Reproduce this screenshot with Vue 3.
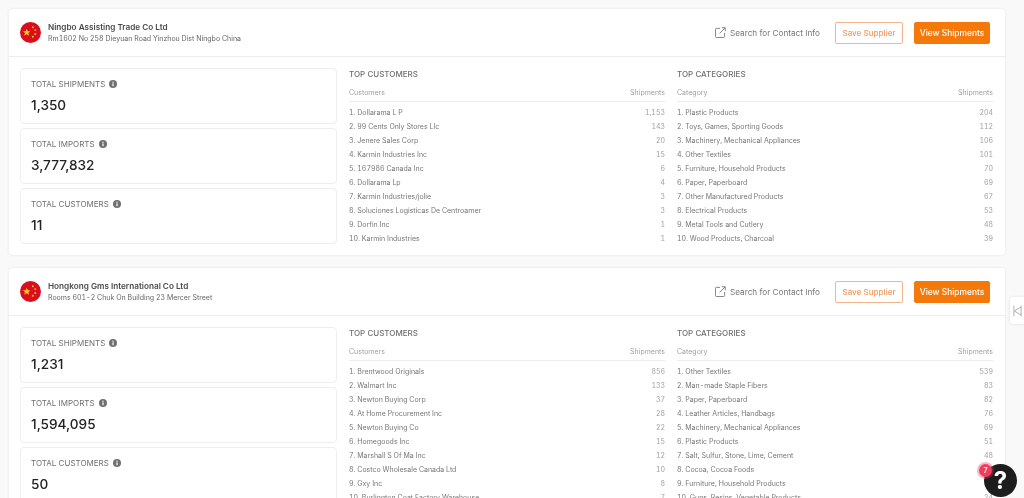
<script setup>
const suppliers = [
  {
    name: 'Ningbo Assisting Trade Co Ltd',
    address: 'Rm1602 No 258 Dieyuan Road Yinzhou Dist Ningbo China',
    stats: [['TOTAL SHIPMENTS', '1,350'], ['TOTAL IMPORTS', '3,777,832'], ['TOTAL CUSTOMERS', '11']],
    customers: [['Dollarama L P', '1,153'], ['99 Cents Only Stores Llc', '143'], ['Jenere Sales Corp', '20'], ['Karmin Industries Inc', '15'], ['167986 Canada Inc', '6'], ['Dollarama Lp', '4'], ['Karmin Industries/jolie', '3'], ['Soluciones Logisticas De Centroamer', '3'], ['Dorfin Inc', '1'], ['Karmin Industries', '1']],
    categories: [['Plastic Products', '204'], ['Toys, Games, Sporting Goods', '112'], ['Machinery, Mechanical Appliances', '106'], ['Other Textiles', '101'], ['Furniture, Household Products', '70'], ['Paper, Paperboard', '69'], ['Other Manufactured Products', '67'], ['Electrical Products', '53'], ['Metal Tools and Cutlery', '48'], ['Wood Products, Charcoal', '39']]
  },
  {
    name: 'Hongkong Gms International Co Ltd',
    address: 'Rooms 601-2 Chuk On Building 23 Mercer Street',
    stats: [['TOTAL SHIPMENTS', '1,231'], ['TOTAL IMPORTS', '1,594,095'], ['TOTAL CUSTOMERS', '50']],
    customers: [['Brentwood Originals', '856'], ['Walmart Inc', '133'], ['Newton Buying Corp', '37'], ['At Home Procurement Inc', '28'], ['Newton Buying Co', '22'], ['Homegoods Inc', '15'], ['Marshall S Of Ma Inc', '12'], ['Costco Wholesale Canada Ltd', '10'], ['Gxy Inc', '8'], ['Burlington Coat Factory Warehouse', '7']],
    categories: [['Other Textiles', '539'], ['Man-made Staple Fibers', '83'], ['Paper, Paperboard', '82'], ['Leather Articles, Handbags', '76'], ['Machinery, Mechanical Appliances', '69'], ['Plastic Products', '51'], ['Salt, Sulfur, Stone, Lime, Cement', '48'], ['Cocoa, Cocoa Foods', '47'], ['Furniture, Household Products', '32'], ['Guns, Resins, Vegetable Products', '24']]
  }
]
const tables = (s) => [
  { title: 'TOP CUSTOMERS', head: 'Customers', rows: s.customers },
  { title: 'TOP CATEGORIES', head: 'Category', rows: s.categories }
]
const stars = [[13.5, 5.5, 1], [16, 8.5, 1], [16, 12.5, 1], [13.5, 15.5, 1]]
</script>

<template>
  <div class="page">
    <section v-for="s in suppliers" :key="s.name" class="card">
      <header class="head">
        <svg class="flag" viewBox="0 0 22 22" width="21" height="21">
          <circle cx="11" cy="11" r="11" fill="#d80f1e" />
          <polygon points="7,7 8.1,9.6 10.9,9.8 8.8,11.6 9.5,14.4 7,12.9 4.5,14.4 5.2,11.6 3.1,9.8 5.9,9.6" fill="#ffc91f" />
          <circle v-for="(p, i) in stars" :key="i" :cx="p[0]" :cy="p[1]" :r="p[2]" fill="#ffc91f" />
        </svg>
        <div class="who">
          <div class="name">{{ s.name }}</div>
          <div class="addr">{{ s.address }}</div>
        </div>
        <a class="contact">
          <svg viewBox="0 0 12 12" width="11" height="11" fill="none" stroke="#7a7a7a" stroke-width="1">
            <path d="M5.5 1.5H1.5a1 1 0 0 0-1 1v8a1 1 0 0 0 1 1h8a1 1 0 0 0 1-1V6.5" />
            <path d="M5 7L11 1M7.5 .8H11.2V4.5" />
          </svg>
          Search for Contact Info
        </a>
        <button class="btn save">Save Supplier</button>
        <button class="btn view">View Shipments</button>
      </header>
      <div class="body">
        <div class="stats">
          <div v-for="st in s.stats" :key="st[0]" class="stat">
            <div class="label">
              {{ st[0] }}
              <svg viewBox="0 0 8 8" width="8" height="8">
                <circle cx="4" cy="4" r="4" fill="#707070" />
                <rect x="3.4" y="3.4" width="1.2" height="2.8" fill="#fff" />
                <rect x="3.4" y="1.7" width="1.2" height="1.1" fill="#fff" />
              </svg>
            </div>
            <div class="value">{{ st[1] }}</div>
          </div>
        </div>
        <div v-for="t in tables(s)" :key="t.title" class="table">
          <h3>{{ t.title }}</h3>
          <div class="thead"><span>{{ t.head }}</span><span>Shipments</span></div>
          <div v-for="(r, i) in t.rows" :key="r[0]" class="row">
            <span class="item">{{ i + 1 }}. {{ r[0] }}</span>
            <span class="num">{{ r[1] }}</span>
          </div>
        </div>
      </div>
    </section>

    <div class="tab">
      <svg viewBox="0 0 10 13" width="9" height="12" fill="none" stroke="#a8a8a8" stroke-width="1">
        <path d="M1 0.5V12.5M9 0.5V12.5M9 2L1.5 6.5L9 11" />
      </svg>
    </div>
    <div class="help">?</div>
    <div class="badge">7</div>
  </div>
</template>

<style>
html, body { margin: 0; background: #f9f9f9; overflow: hidden; }
</style>

<style scoped>
.page {
  position: relative;
  height: 498px;
  overflow: hidden;
  box-sizing: border-box;
  padding: 9px 19px 0 9px;
  background: #f9f9f9;
  font-family: Inter, "Liberation Sans", sans-serif;
  display: flex;
  flex-direction: column;
  gap: 13px;
  filter: blur(0.35px);
}
.card {
  flex: none;
  height: 246px;
  background: #fff;
  border-radius: 4px;
  box-shadow: 0 0 3px rgba(0, 0, 0, 0.09);
}
.head {
  height: 48px;
  box-sizing: border-box;
  border-bottom: 1px solid #ececec;
  padding: 0 15px 0 11px;
  display: flex;
  align-items: center;
}
.flag { flex: none; margin-right: 7px; }
.who { flex: 1; padding-top: 1px; }
.name { font-size: 8.2px; font-weight: 600; color: #4a4a4a; line-height: 12px; }
.addr { font-size: 7px; color: #666; line-height: 12px; font-variant-numeric: tabular-nums; }
.contact {
  display: flex;
  align-items: center;
  gap: 4px;
  font-size: 8.2px;
  color: #777;
  margin-right: 15px;
}
.btn {
  font-family: inherit;
  font-size: 8.1px;
  font-weight: 500;
  height: 22px;
  border-radius: 2px;
  padding: 0;
}
.save { width: 68px; background: #fff; border: 1px solid #f4b48c; color: #f39a62; margin-right: 11px; }
.view { width: 76px; background: #f5790a; border: 1px solid #f5790a; color: #fff; font-size: 8.4px; }
.body {
  display: flex;
  gap: 12px;
  padding: 11px 12px 0 11px;
}
.stats {
  flex: none;
  width: 317px;
  display: flex;
  flex-direction: column;
  gap: 4px;
}
.stat {
  height: 56px;
  box-sizing: border-box;
  border: 1px solid #eee;
  border-radius: 4px;
  padding: 9px 10px 0;
}
.label {
  display: flex;
  align-items: center;
  gap: 4px;
  font-size: 8px;
  color: #6f6f6f;
  line-height: 12px;
}
.value { font-size: 13.6px; font-weight: 500; color: #222; line-height: 20px; margin-top: 5px; }
.table { flex: 1; min-width: 0; }
h3 {
  margin: 0;
  font-size: 8px;
  font-weight: 500;
  color: #6f6f6f;
  line-height: 12px;
}
.thead {
  display: flex;
  justify-content: space-between;
  margin-top: 6px;
  height: 15px;
  line-height: 14px;
  border-bottom: 1px solid #ececec;
  font-size: 7px;
  color: #a0a0a0;
}
.row {
  display: flex;
  justify-content: space-between;
  height: 14px;
  line-height: 14px;
  font-size: 7px;
  font-variant-numeric: tabular-nums;
}
.thead + .row { margin-top: 4px; }
.item { color: #777; }
.num { color: #a0a0a0; }
.tab {
  position: absolute;
  right: 0;
  top: 297px;
  width: 14px;
  height: 27px;
  background: #fff;
  border-radius: 3px 0 0 3px;
  box-shadow: 0 0 3px rgba(0, 0, 0, 0.12);
  display: flex;
  align-items: center;
  justify-content: center;
}
.help {
  position: absolute;
  left: 984px;
  top: 464px;
  width: 33px;
  height: 33px;
  border-radius: 50%;
  background: #1d1d1d;
  color: #fff;
  font-size: 24px;
  font-weight: 700;
  line-height: 33px;
  text-align: center;
}
.badge {
  position: absolute;
  left: 979px;
  top: 464px;
  width: 13px;
  height: 13px;
  border-radius: 50%;
  background: #ee3e5c;
  box-shadow: 0 0 0 2px rgba(238, 62, 92, 0.35);
  color: #fff;
  font-size: 7px;
  font-weight: 600;
  line-height: 13px;
  text-align: center;
}
</style>
